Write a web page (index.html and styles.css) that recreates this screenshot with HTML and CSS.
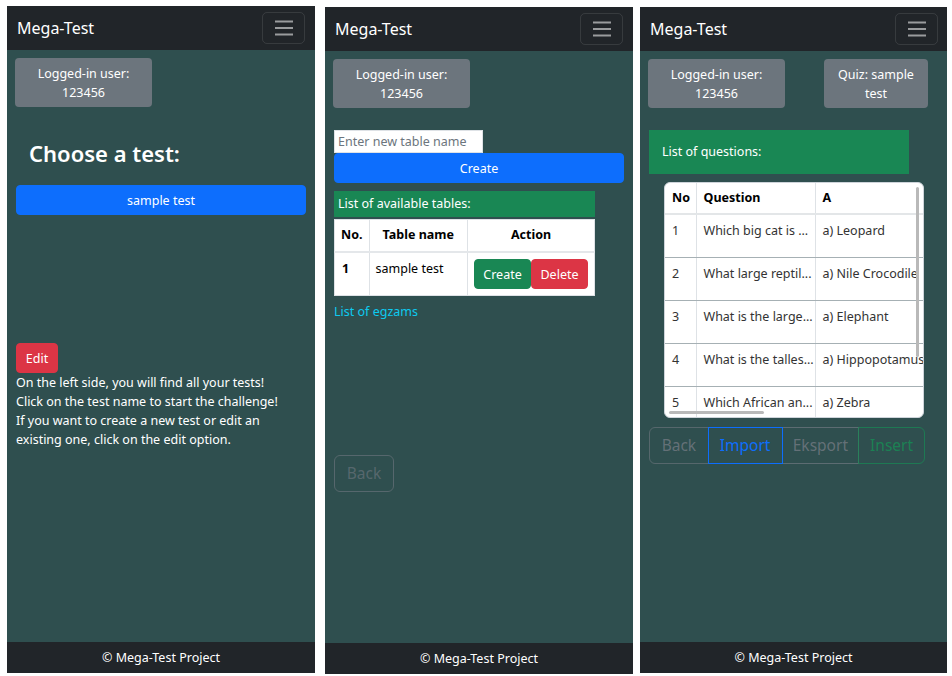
FILE: index.html
```html
<!DOCTYPE html>
<html lang="en">
<head>
<meta charset="utf-8">
<title>Mega-Test</title>
<link rel="stylesheet" href="styles.css">
</head>
<body>
<div class="screens">

  <section class="phone phone-1">
    <nav class="navbar">
      <span class="brand">Mega-Test</span>
      <button class="toggler" aria-label="menu">
        <svg width="24" height="24" viewBox="0 0 24 24"><path d="M3 5.5h18M3 12h18M3 18.5h18" stroke="rgba(255,255,255,0.55)" stroke-width="2" fill="none"/></svg>
      </button>
    </nav>
    <main class="content content-1">
      <div class="badge">Logged-in user:<br>123456</div>
      <h2 class="choose">Choose a test:</h2>
      <button class="btn btn-primary btn-block">sample test</button>
      <button class="btn btn-danger btn-edit">Edit</button>
      <p class="info">On the left side, you will find all your tests!<br>Click on the test name to start the challenge!<br>If you want to create a new test or edit an existing one, click on the edit option.</p>
    </main>
    <footer class="footer">© Mega-Test Project</footer>
  </section>

  <section class="phone phone-2">
    <nav class="navbar">
      <span class="brand">Mega-Test</span>
      <button class="toggler" aria-label="menu">
        <svg width="24" height="24" viewBox="0 0 24 24"><path d="M3 5.5h18M3 12h18M3 18.5h18" stroke="rgba(255,255,255,0.55)" stroke-width="2" fill="none"/></svg>
      </button>
    </nav>
    <main class="content content-2">
      <div class="badge">Logged-in user:<br>123456</div>
      <input class="name-input" type="text" placeholder="Enter new table name">
      <button class="btn btn-primary btn-block">Create</button>
      <div class="list-head list-head-sm">List of available tables:</div>
      <table class="tables">
        <thead>
          <tr><th class="c-no">No.</th><th class="c-name">Table name</th><th class="c-act">Action</th></tr>
        </thead>
        <tbody>
          <tr>
            <td class="c-no"><b>1</b></td>
            <td class="c-name">sample test</td>
            <td class="c-act"><span class="act-group"><button class="btn btn-success">Create</button><button class="btn btn-danger">Delete</button></span></td>
          </tr>
        </tbody>
      </table>
      <a class="link" href="#">List of egzams</a>
      <button class="btn btn-outline btn-back">Back</button>
    </main>
    <footer class="footer">© Mega-Test Project</footer>
  </section>

  <section class="phone phone-3">
    <nav class="navbar">
      <span class="brand">Mega-Test</span>
      <button class="toggler" aria-label="menu">
        <svg width="24" height="24" viewBox="0 0 24 24"><path d="M3 5.5h18M3 12h18M3 18.5h18" stroke="rgba(255,255,255,0.55)" stroke-width="2" fill="none"/></svg>
      </button>
    </nav>
    <main class="content content-3">
      <div class="badges">
        <div class="badge">Logged-in user:<br>123456</div>
        <div class="badge badge-quiz">Quiz: sample test</div>
      </div>
      <div class="list-head list-head-lg">List of questions:</div>
      <div class="q-card">
        <table class="questions">
          <thead>
            <tr><th class="q-no">No</th><th class="q-text">Question</th><th class="q-a">A</th></tr>
          </thead>
          <tbody>
            <tr><td class="q-no">1</td><td class="q-text">Which big cat is ...</td><td class="q-a">a) Leopard</td></tr>
            <tr><td class="q-no">2</td><td class="q-text">What large reptil...</td><td class="q-a">a) Nile Crocodile</td></tr>
            <tr><td class="q-no">3</td><td class="q-text">What is the large...</td><td class="q-a">a) Elephant</td></tr>
            <tr><td class="q-no">4</td><td class="q-text">What is the talles...</td><td class="q-a">a) Hippopotamus</td></tr>
            <tr><td class="q-no">5</td><td class="q-text">Which African an...</td><td class="q-a">a) Zebra</td></tr>
          </tbody>
        </table>
        <span class="scroll-v"></span>
        <span class="scroll-h"></span>
      </div>
      <div class="btn-group">
        <button class="btn g-back">Back</button>
        <button class="btn g-import">Import</button>
        <button class="btn g-export">Eksport</button>
        <button class="btn g-insert">Insert</button>
      </div>
    </main>
    <footer class="footer">© Mega-Test Project</footer>
  </section>

</div>
</body>
</html>
```

FILE: styles.css
```css
* { box-sizing: border-box; }

html, body {
  margin: 0;
  padding: 0;
  background: #ffffff;
}

body {
  font-family: "Noto Sans", "Open Sans", sans-serif;
  font-size: 12.5px;
  line-height: 19px;
  color: #fff;
}

.screens {
  display: flex;
  align-items: flex-start;
}

.phone {
  display: flex;
  flex-direction: column;
  width: 308px;
  background: #2f4f4f;
}

.phone-1 { margin: 6px 0 0 7px; height: 667px; }
.phone-2 { margin: 7px 0 0 10px; height: 667px; }
.phone-3 { margin: 7px 0 0 7px; height: 666px; width: 307px; }

/* navbar */
.navbar {
  height: 44px;
  flex: none;
  background: #212529;
  display: flex;
  align-items: center;
  justify-content: space-between;
  padding: 0 10px;
}
.phone-3 .navbar { padding: 0 9px 0 10px; }

.brand {
  font-size: 16px;
  color: #fff;
}

.toggler {
  width: 43px;
  height: 32px;
  padding: 0;
  background: transparent;
  border: 1px solid rgba(255, 255, 255, 0.1);
  border-radius: 5px;
  display: flex;
  align-items: center;
  justify-content: center;
}

/* footer */
.footer {
  height: 31px;
  flex: none;
  background: #212529;
  color: #fff;
  text-align: center;
  line-height: 31px;
  font-size: 12.5px;
}

.content {
  flex: 1;
  display: flex;
  flex-direction: column;
  align-items: flex-start;
  padding: 8px 9px 0 9px;
}

/* badges */
.badge {
  width: 137px;
  height: 49px;
  background: #6c757d;
  border-radius: 4px;
  color: #fff;
  text-align: center;
  padding: 6px 4px;
  line-height: 19px;
  margin-left: -1px;
}

.badges {
  display: flex;
  justify-content: space-between;
  width: 280px;
  margin-left: -1px;
}
.badges .badge { margin-left: 0; }
.badge-quiz { width: 104px; padding: 6px 12px; }

/* buttons */
.btn {
  font-family: inherit;
  font-size: 12.5px;
  line-height: 19px;
  border: 1px solid transparent;
  border-radius: 4px;
  color: #fff;
  padding: 5px 10px;
  height: 30px;
  cursor: pointer;
}
.btn-primary { background: #0d6efd; border-color: #0d6efd; }
.btn-danger { background: #dc3545; border-color: #dc3545; }
.btn-success { background: #198754; border-color: #198754; }
.btn-block { width: 290px; }

/* panel 1 */
.choose {
  margin: 33px 0 0 13px;
  font-size: 22px;
  line-height: 26px;
  font-weight: 600;
}
.content-1 .btn-block { margin-top: 19px; }
.btn-edit { margin-top: 128px; width: 42px; padding: 5px 0; }
.info {
  margin: 0;
  width: 268px;
}

/* panel 2 */
.name-input {
  margin-top: 22px;
  width: 149px;
  height: 23px;
  border: 1px solid #dee2e6;
  padding: 0 3px;
  font-family: inherit;
  font-size: 12.5px;
  color: #212529;
  background: #fff;
}
.name-input::placeholder { color: #6c757d; }

.list-head {
  background: #198754;
  color: #fff;
}
.list-head-sm {
  margin-top: 8px;
  width: 261px;
  height: 26px;
  line-height: 25px;
  padding-left: 4px;
}
.tables {
  margin-top: 2px;
  width: 261px;
  border-collapse: collapse;
  background: #fff;
  color: #000;
}
.tables th, .tables td {
  border: 1px solid #dee2e6;
  padding: 6px 6px;
  line-height: 19px;
  vertical-align: top;
}
.tables th { text-align: center; font-weight: 700; height: 32px; padding-top: 5px; }
.tables thead tr { border-bottom: 2px solid #e4e7ea; }
.tables td { height: 44px; }
.tables .c-no { width: 34px; }
.tables .c-name { width: 101px; }
.tables td.c-no { padding-left: 7px; padding-top: 6px; }
.tables td.c-name { padding-top: 6px; }
.tables td.c-act { padding: 6px 6px; }
.act-group { display: flex; }
.act-group .btn { padding: 5px 0; }
.act-group .btn-success { width: 57px; }
.act-group .btn-danger { width: 57px; }

.link {
  margin-top: 6px;
  color: #0dcaf0;
  text-decoration: none;
}

.btn-outline {
  background: transparent;
  border: 1px solid #6c757d;
  color: #6c757d;
  opacity: 0.65;
}
.btn-back {
  margin-top: 134px;
  height: 37px;
  width: 60px;
  font-size: 15.5px;
  border-radius: 6px;
  padding: 0;
}

/* panel 3 */
.list-head-lg {
  margin-top: 22px;
  width: 260px;
  height: 44px;
  line-height: 44px;
  padding-left: 13px;
}

.q-card {
  position: relative;
  margin: 8px 0 0 15px;
  width: 260px;
  height: 236px;
  background: #fff;
  border: 1px solid #ced4da;
  border-radius: 6px;
  overflow: hidden;
}
.questions {
  border-collapse: collapse;
  color: #212529;
  width: 360px;
  table-layout: fixed;
}
.questions th, .questions td {
  text-align: left;
  vertical-align: top;
  white-space: nowrap;
  overflow: hidden;
  padding: 6px 6px 0 7px;
  border-left: 1px solid #dee2e6;
}
.questions th:first-child, .questions td:first-child { border-left: none; }
.questions th {
  font-weight: 700;
  color: #000;
  height: 31px;
  padding-top: 5px;
  border-bottom: 2px solid #e3e6e8;
}
.questions td {
  height: 43px;
  border-bottom: 1px solid #a6b0b4;
  color: #333;
}
.questions .q-no { width: 31px; }
.questions .q-text { width: 119px; }
.questions .q-a { width: 210px; }

.scroll-v {
  position: absolute;
  right: 4px;
  top: 4px;
  width: 3px;
  height: 170px;
  background: #b9b9b9;
  border-radius: 2px;
}
.scroll-h {
  position: absolute;
  left: 4px;
  bottom: 3px;
  width: 95px;
  height: 3px;
  background: #b9b9b9;
  border-radius: 2px;
}

.btn-group {
  margin-top: 9px;
  display: flex;
  width: 276px;
}
.btn-group .btn {
  height: 37px;
  font-size: 15.5px;
  background: transparent;
  padding: 0;
  border-radius: 0;
  margin-left: -1px;
}
.btn-group .btn:first-child { border-top-left-radius: 6px; border-bottom-left-radius: 6px; margin-left: 0; }
.btn-group .btn:last-child { border-top-right-radius: 6px; border-bottom-right-radius: 6px; }
.g-back { width: 60px; border-color: rgba(108,117,125,0.65); color: rgba(108,117,125,0.9); }
.g-import { width: 75px; border-color: #0d6efd; color: #0d6efd; position: relative; z-index: 1; }
.g-export { width: 78px; border-color: rgba(108,117,125,0.75); color: rgba(108,117,125,0.9); }
.g-insert { width: 67px; border-color: rgba(25,135,84,0.75); color: rgba(25,135,84,0.9); }
```
